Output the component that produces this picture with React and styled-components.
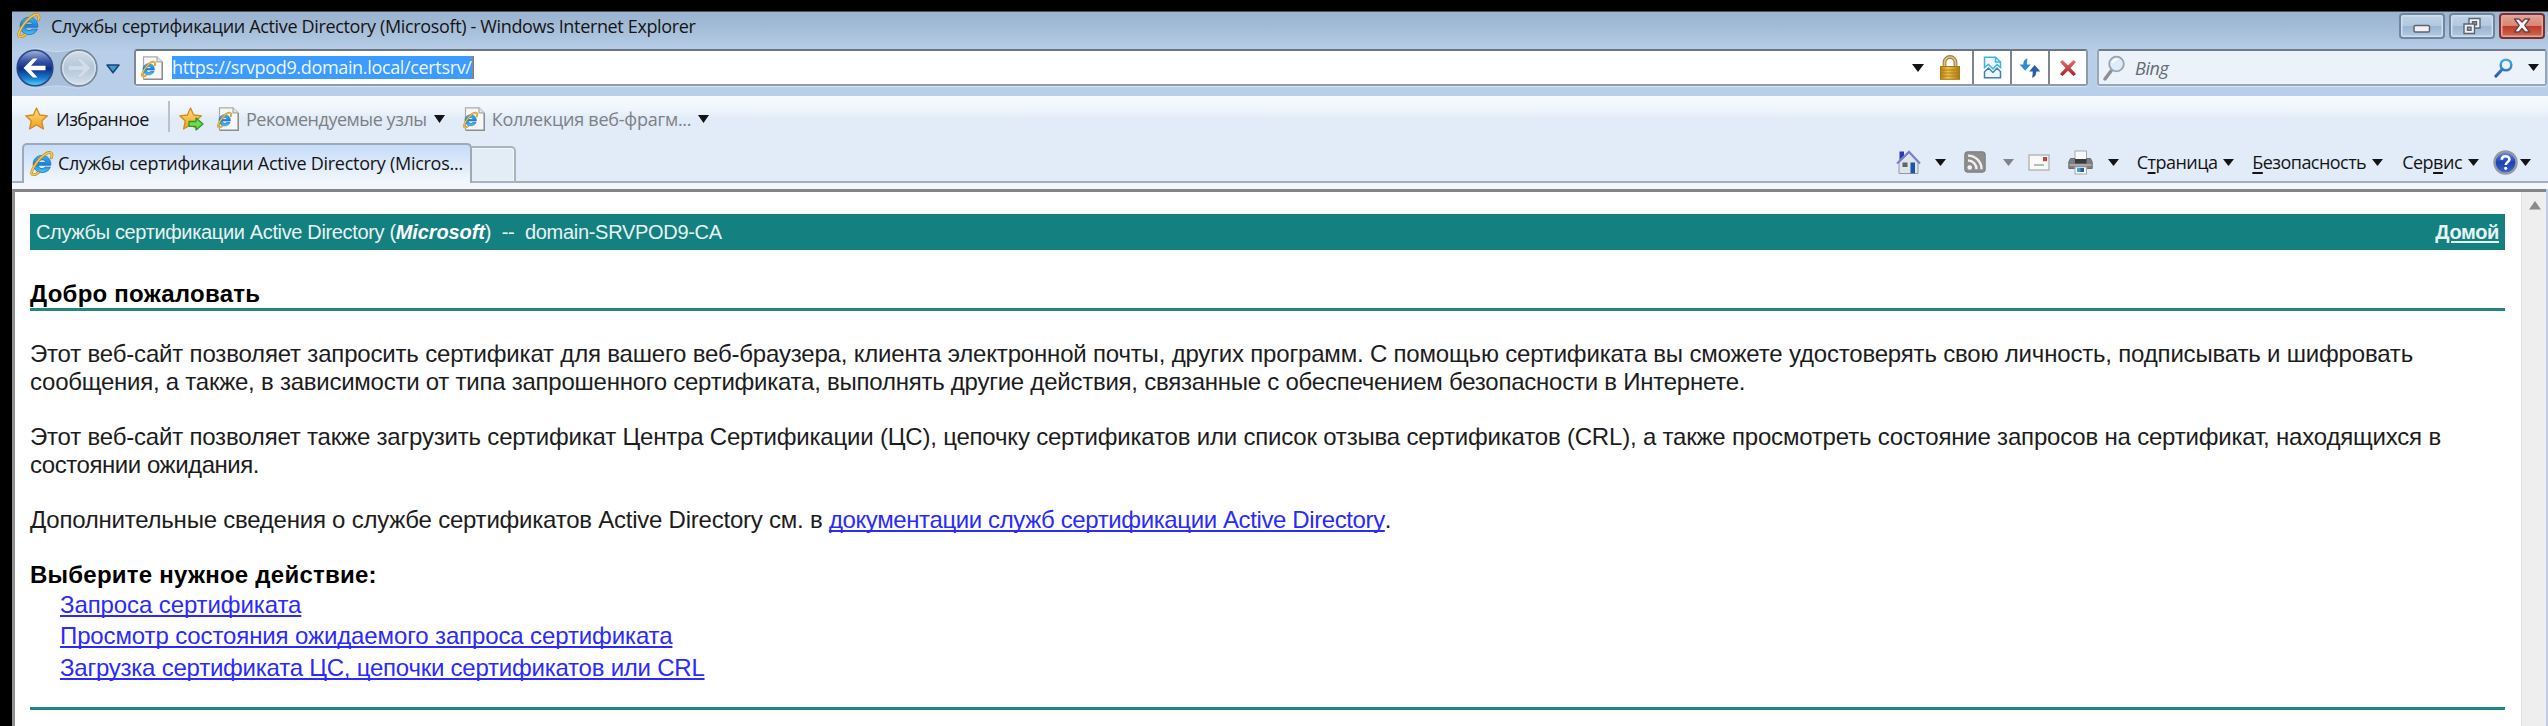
import React from 'react';
import styled, { createGlobalStyle } from 'styled-components';

const Global = createGlobalStyle`
  * { box-sizing: border-box; }
  html, body { margin: 0; background: #000; }
  svg { display: block; flex: none; }
`;

const UI_FONT = "'Open Sans', 'Noto Sans', sans-serif";
const PAGE_FONT = "'Liberation Sans', Arial, sans-serif";

const Desktop = styled.div`
  width: 2548px;
  height: 726px;
  padding: 11px 0 0 12px;
  background: #000;
  overflow: hidden;
`;

const Window = styled.div`
  display: flex;
  flex-direction: column;
  height: 715px;
  border-top: 1px solid #4d5358;
  background: linear-gradient(#9cb4cf 0, #9fb8d3 10px, #b9cfe9 40px, #b9cfe9 84px);
  font-family: ${UI_FONT};
  font-size: 18px;
  color: #141414;
`;

const Label = styled.span`
  white-space: pre;
  line-height: 24px;
  letter-spacing: ${(p) => p.$track || 0}px;
  margin-left: ${(p) => p.$gap || 0}px;
  color: ${(p) => p.$color || 'inherit'};
  font-style: ${(p) => (p.$italic ? 'italic' : 'normal')};
  u { text-decoration-thickness: 1.5px; text-underline-offset: 3px; }
`;

const TitleBar = styled.header`
  display: flex;
  align-items: center;
  height: 28px;
  padding: 0 3px 1px 4px;
`;

const Spacer = styled.div`
  flex: 1;
`;

const WindowButtons = styled.div`
  display: flex;
  gap: 4px;
`;

const WindowButton = styled.button`
  display: flex;
  align-items: center;
  justify-content: center;
  width: 46px;
  height: 26px;
  padding: 0;
  border: 2px solid ${(p) => (p.$close ? '#7a3033' : '#71859d')};
  border-radius: 4px;
  box-shadow: inset 0 0 0 1.5px ${(p) => (p.$close ? '#e4a79f' : '#cfdff0')};
  background: ${(p) =>
    p.$close
      ? 'linear-gradient(#e3a092 0, #d98677 48%, #bd3a25 50%, #cf6a50 100%)'
      : 'linear-gradient(#bfd2e7 0, #b3c9e0 48%, #9bb5d2 50%, #b0c9e3 100%)'};
`;

const NavBar = styled.div`
  display: flex;
  align-items: flex-start;
  height: 56px;
  padding: 7px 1px 0 3px;
`;

const NavDrop = styled.div`
  flex: none;
  width: 31px;
  padding: 17px 0 0 3px;
`;

const AddressBox = styled.div`
  display: flex;
  flex: none;
  align-items: stretch;
  width: 1954px;
  height: 37px;
  margin-top: 2px;
  border: 2px solid #8e9bab;
  border-top-color: #6b7683;
  border-left-color: #7c8896;
  border-radius: 3px;
  background: #fff;
  box-shadow: 0 1px 1px #d8e6f4;
`;

const AddressMain = styled.div`
  display: flex;
  align-items: center;
  flex: 1;
  padding: 0 11px 0 4px;
`;

const Selected = styled.span`
  height: 23px;
  margin-left: 8px;
  padding-right: 1px;
  border-right: 1.5px solid #cc6a1c;
  background: #3b9bff;
  color: #eef6ff;
  line-height: 22px;
  letter-spacing: -0.34px;
`;

const AddressButton = styled.div`
  display: flex;
  align-items: center;
  justify-content: center;
  width: 38px;
  border-left: 2px solid #7f868e;
`;

const SearchBox = styled.div`
  display: flex;
  flex: none;
  align-items: center;
  width: 450px;
  height: 37px;
  margin: 2px 0 0 9px;
  padding: 0 6px 0 4px;
  border: 2px solid #98a6b8;
  border-top-color: #707b89;
  border-radius: 3px;
  background: #ebf2fa;
  box-shadow: 0 1px 1px #d8e6f4;
`;

const Chrome = styled.div`
  background: linear-gradient(#f6fafe 0, #eff5fc 14px, #e2ecf8 22px, #e2ecf9 100%);
`;

const FavoritesBar = styled.div`
  display: flex;
  align-items: center;
  height: 47px;
  padding: 0 0 2px 13px;
`;

const Divider = styled.i`
  width: 2px;
  height: 31px;
  margin: -4px 9px 0 19px;
  background: #bcc1c8;
`;

const TabRow = styled.div`
  display: flex;
  align-items: flex-end;
  height: 40px;
`;

const RowEdge = styled.i`
  width: ${(p) => p.$width || 0}px;
  height: 2px;
  background: #a5afbc;
`;

const Tab = styled.div`
  display: flex;
  align-items: center;
  width: 450px;
  height: 40px;
  padding: 0 0 2px 5px;
  border: 2px solid #9fa9b5;
  border-bottom: 0;
  border-radius: 5px 5px 0 0;
  background: linear-gradient(#c6dcf8 0, #dce9fa 50%, #f4f8fd 100%);
`;

const NewTab = styled.div`
  width: 44px;
  height: 37px;
  border: 2px solid #aab3be;
  border-left: 0;
  border-radius: 0 5px 0 0;
  background: #e3edf6;
  box-shadow: inset -1px 1px 0 #f2f7fc;
`;

const CommandBar = styled.div`
  display: flex;
  align-items: center;
  flex: 1;
  height: 40px;
  padding: 0 17px 0 1380px;
  border-bottom: 2px solid #a5afbc;
`;

const Slot = styled.div`
  display: flex;
  margin-left: ${(p) => p.$gap || 0}px;
`;

const Strip = styled.div`
  height: 6px;
  background: #f3f7fd;
`;

const Viewport = styled.div`
  display: flex;
  flex: 1;
  margin-right: 2px;
  border-top: 3px solid #858585;
  border-left: 3px solid #909090;
  background: #fff;
`;

const Page = styled.main`
  flex: 1;
  padding: 22px 16px 0 15px;
  font-family: ${PAGE_FONT};
  font-size: 24px;
  line-height: 27.7px;
  color: #1c1c1c;
`;

const ScrollBar = styled.aside`
  width: 25px;
  padding: 9px 0 0 7px;
  background: #eeeeee;
  border-left: 1px solid #e2e2e2;
`;

const Banner = styled.div`
  display: flex;
  justify-content: space-between;
  align-items: center;
  height: 36px;
  padding: 1px 6px 0;
  background: #148080;
  color: #e6f3f3;
  font-size: 20px;
`;

const Text = styled.span`
  white-space: pre;
  letter-spacing: ${(p) => p.$track || 0}px;
`;

const Brand = styled.b`
  font-style: italic;
  letter-spacing: -0.1px;
  color: #fff;
`;

const HomeLink = styled.a`
  font-weight: 700;
  letter-spacing: -0.35px;
  text-decoration: underline;
  text-decoration-thickness: 2px;
  text-underline-offset: 2px;
`;

const Heading = styled.h1`
  margin: 29px 0 0;
  height: 32px;
  border-bottom: 3px solid #218585;
  font-size: 24px;
  line-height: 29px;
  letter-spacing: 0.25px;
  color: #000;
`;

const Paragraph = styled.p`
  margin: ${(p) => p.$top || 27.7}px 0 0;
`;

const Line = styled.span`
  display: block;
  white-space: pre;
  letter-spacing: ${(p) => p.$track}px;
`;

const Link = styled.a`
  color: #2a2aff;
  letter-spacing: ${(p) => p.$track}px;
  text-decoration: underline;
  text-decoration-thickness: 2px;
  text-underline-offset: 2px;
  text-decoration-skip-ink: none;
`;

const Subheading = styled.h2`
  margin: 27.7px 0 0;
  font-size: 24px;
  line-height: 27.7px;
  letter-spacing: 0.24px;
  color: #000;
`;

const ActionList = styled.ul`
  margin: 0;
  padding: 0 0 0 30px;
  list-style: none;
  line-height: 31.3px;
`;

const Rule = styled.hr`
  height: 3px;
  margin: 24px 0 0;
  border: 0;
  background: #218585;
`;

const GradientHolder = styled.div`
  height: 0;
  overflow: hidden;
`;

function Caret({ w = 11, h = 7, color = '#141414' }) {
  return (
    <svg width={w} height={h} viewBox="0 0 12 7" preserveAspectRatio="none">
      <path d="M0 0h12L6 7z" fill={color} />
    </svg>
  );
}

function ExplorerShape() {
  return (
    <>
      <path
        d="M12.6 4.200c-5 0-8.600 3.600-8.600 8.200 0 4.700 3.600 8.300 8.600 8.300 3.700 0 6.700-2 7.900-5.200h-5c-.6.9-1.600 1.400-2.800 1.400-2.100 0-3.500-1.300-3.600-3.200h11.800c.4-5.600-3-9.500-8.300-9.500zm-3.400 6.800c.4-1.600 1.600-2.600 3.400-2.600s3 1 3.300 2.600z"
        fill="url(#ieBlue)"
        stroke="#1565b5"
        strokeWidth=".7"
      />
      <path
        d="M21.500 6.500c1-2.600.6-4.600-1-5-2.700-.7-8.200 3-12.500 8.700-4.600 6-6.800 11.600-4.500 12.600 1.200.5 3.200-.3 5.500-2"
        fill="none"
        stroke="#b98213"
        strokeWidth="2.600"
        strokeLinecap="round"
      />
      <path
        d="M21.500 6.500c1-2.600.6-4.600-1-5-2.700-.7-8.200 3-12.500 8.700-4.600 6-6.800 11.600-4.500 12.600 1.200.5 3.200-.3 5.500-2"
        fill="none"
        stroke="#f6c94a"
        strokeWidth="1.500"
        strokeLinecap="round"
      />
    </>
  );
}

function Gradients() {
  return (
    <svg width="0" height="0">
      <defs>
        <linearGradient id="ieBlue" x1="0" y1="0" x2="0" y2="1">
          <stop offset="0" stopColor="#37b4f0" />
          <stop offset=".5" stopColor="#1a86dc" />
          <stop offset="1" stopColor="#49c3f7" />
        </linearGradient>
        <linearGradient id="starGold" x1="0" y1="0" x2="0" y2="1">
          <stop offset="0" stopColor="#ffe27a" />
          <stop offset="1" stopColor="#f39a1c" />
        </linearGradient>
        <linearGradient id="backBlue" x1="0" y1="0" x2="0" y2="1">
          <stop offset="0" stopColor="#a6b6dc" />
          <stop offset=".3" stopColor="#3c55a8" />
          <stop offset=".52" stopColor="#0d2d88" />
          <stop offset=".8" stopColor="#1c7fd0" />
          <stop offset="1" stopColor="#55dcff" />
        </linearGradient>
        <linearGradient id="forwardGray" x1="0" y1="0" x2="0" y2="1">
          <stop offset="0" stopColor="#d3dde8" />
          <stop offset=".5" stopColor="#b5c6d8" />
          <stop offset="1" stopColor="#d4e1ee" />
        </linearGradient>
        <linearGradient id="lockGold" x1="0" y1="0" x2="1" y2="0">
          <stop offset="0" stopColor="#b8810f" />
          <stop offset=".4" stopColor="#f0c24a" />
          <stop offset="1" stopColor="#b07a10" />
        </linearGradient>
        <linearGradient id="redCross" x1="0" y1="0" x2="0" y2="1">
          <stop offset="0" stopColor="#e8736f" />
          <stop offset="1" stopColor="#a02024" />
        </linearGradient>
        <linearGradient id="lensBlue" gradientUnits="userSpaceOnUse" x1="0" y1="0" x2="0" y2="20">
          <stop offset="0" stopColor="#43b4e4" />
          <stop offset="1" stopColor="#2a55b0" />
        </linearGradient>
        <linearGradient id="helpBlue" x1="0" y1="0" x2="0" y2="1">
          <stop offset="0" stopColor="#6d8fe0" />
          <stop offset=".5" stopColor="#1f41b0" />
          <stop offset="1" stopColor="#3a68dc" />
        </linearGradient>
      </defs>
    </svg>
  );
}

function ExplorerIcon() {
  return (
    <svg width="25" height="25" viewBox="0 0 24 24">
      <ExplorerShape />
    </svg>
  );
}

function PageIcon() {
  return (
    <svg width="24" height="24" viewBox="0 0 24 24">
      <path d="M3.500.8h13.500l5 5v17.400H3.500z" fill="#f7f7f7" stroke="#a9a9a9" strokeWidth="1.200" />
      <path d="M17 .8v5h5" fill="#e4e4e4" stroke="#a9a9a9" strokeWidth="1.200" />
      <path d="M22.400 6v17.400H4" fill="none" stroke="#8e8e8e" strokeWidth="1.200" />
      <g transform="translate(.2 4.800) scale(.68)">
        <ExplorerShape />
      </g>
    </svg>
  );
}

function NavButtons() {
  return (
    <svg width="88" height="42" viewBox="0 0 88 42">
      <path
        d="M20 1.500c8 0 12 3 22 3s16-3 22-3a20 20 0 0 1 0 39.500c-8 0-12-2-22-2s-14 2-22 2a20 20 0 0 1 0-39.500z"
        fill="#a9c0da"
        stroke="#cbdcee"
        strokeWidth="1"
      />
      <circle cx="20" cy="21" r="17.800" fill="url(#backBlue)" stroke="#2b4886" strokeWidth="1.600" />
      <path d="M8.500 21l9.500-9.500h4.500l-6.500 7.300h14.500v4.400H16l6.500 7.300H18z" fill="#fff" />
      <circle cx="64" cy="21" r="17.800" fill="url(#forwardGray)" stroke="#78889b" strokeWidth="1.800" />
      <circle cx="64" cy="21" r="16.200" fill="none" stroke="#dde7f1" strokeWidth="1.200" />
      <path d="M75.500 21L66 11.500h-4.500l6.500 7.300H53.500v4.400H68l-6.500 7.300H66z" fill="#d2dde9" stroke="#bccad9" strokeWidth=".8" />
    </svg>
  );
}

function NavCaret() {
  return (
    <svg width="14" height="10" viewBox="0 0 14 10">
      <path d="M1 1h12L7 8.800z" fill="#3d9ad0" stroke="#1d4372" strokeWidth="1.500" strokeLinejoin="round" />
    </svg>
  );
}

function StarIcon({ add }) {
  return (
    <svg width="25" height="24" viewBox="0 0 25 24">
      <path
        d="M11.500 1l3.200 7 7.800.8-5.800 5.200 1.700 8-6.900-4-6.900 4 1.700-8L.8 8.800l7.600-.8z"
        fill="url(#starGold)"
        stroke="#cf8b22"
        strokeWidth="1.300"
        strokeLinejoin="round"
      />
      {add && (
        <path
          d="M10 14.500h7v-3.600l7 6-7 6v-3.600h-7z"
          fill="#6fdc4d"
          stroke="#2b9a2b"
          strokeWidth="1.300"
          strokeLinejoin="round"
        />
      )}
    </svg>
  );
}

function LockIcon() {
  return (
    <svg width="22" height="25" viewBox="0 0 22 25">
      <path d="M5.500 12V7.500a5.500 5.500 0 0 1 11 0V12" fill="none" stroke="#9b8244" strokeWidth="3.800" />
      <path d="M5.500 12V7.500a5.500 5.500 0 0 1 11 0V12" fill="none" stroke="#dfc57c" strokeWidth="1.600" />
      <rect x="1.500" y="11.500" width="19" height="12.800" fill="url(#lockGold)" stroke="#a87812" />
      <path d="M2 15h18M2 18h18M2 21h18" stroke="#a97a18" strokeWidth=".9" />
    </svg>
  );
}

function BrokenPageIcon() {
  return (
    <svg width="19" height="23" viewBox="0 0 19 23" fill="#eef8fd" strokeWidth="1.500">
      <path d="M1.500 11.500V1.200h11l5 4.800v5.500l-3.500-3-4 4.500-4.500-4.500z" stroke="#3fb3dc" />
      <path d="M12.500 1.200V6h5" fill="none" stroke="#3fb3dc" />
      <path d="M1.500 21.800v-6l4-3.800 4.500 4.500 4-4.500 3.500 3.500v6.300z" stroke="#3f7fc0" />
    </svg>
  );
}

function RefreshIcon() {
  return (
    <svg width="22" height="22" viewBox="0 0 22 22">
      <path d="M8.500 1.500C5.500 2 4.300 4 4.300 7.500H.6l5.600 6.300 5.600-6.300H7.900c0-2.500.2-4.300.6-6z" fill="#2f8ccc" />
      <path d="M13 20.600c3-.5 4.300-2.600 4.300-6.100h4L15.700 8l-5.500 6.500h3.500c0 2.500-.2 4.400-.7 6.100z" fill="#2a5ea8" />
    </svg>
  );
}

function CrossIcon() {
  return (
    <svg width="18" height="18" viewBox="0 0 18 18">
      <path d="M1 3l2.500-2L9 6.300 14.500 1 17 3l-5.500 6L17 15l-2.500 2L9 11.700 3.500 17 1 15l5.500-6z" fill="url(#redCross)" />
    </svg>
  );
}

function LensIcon() {
  return (
    <svg width="22" height="26" viewBox="0 0 22 26">
      <path d="M8 16l-6 8" stroke="#8f8f93" strokeWidth="3.400" strokeLinecap="round" />
      <circle cx="13.500" cy="9" r="7.300" fill="#dcecfa" stroke="#9aa3ad" strokeWidth="1.800" />
      <path d="M9.500 8a4.300 4.300 0 0 1 5-3.500" fill="none" stroke="#fff" strokeWidth="2" />
    </svg>
  );
}

function SearchIcon() {
  return (
    <svg width="19" height="20" viewBox="0 0 19 20" fill="none" stroke="url(#lensBlue)">
      <circle cx="12" cy="7" r="5.300" strokeWidth="2.500" />
      <path d="M8 11.500l-6 6.500" strokeWidth="3.200" strokeLinecap="round" />
    </svg>
  );
}

function HomeIcon() {
  return (
    <svg width="25" height="25" viewBox="0 0 25 25">
      <path d="M3.500 1.500h4.500v6.500l-4.500 3z" fill="#2a39b8" />
      <path d="M3 12.500L13 3l9 9.500V23.500H3z" fill="#dfe3ea" stroke="#9098a6" strokeWidth="1" />
      <path d="M1 13.500L13 1.800l11 11.700" fill="none" stroke="#7482cc" strokeWidth="2" />
      <rect x="6.500" y="12.500" width="5" height="4.500" fill="#5a6472" />
      <rect x="14.500" y="12.500" width="4.500" height="10.800" fill="#1c55a8" />
    </svg>
  );
}

function FeedIcon() {
  return (
    <svg width="22" height="22" viewBox="0 0 22 22">
      <rect x=".8" y=".8" width="20.400" height="20.400" rx="2.500" fill="#8d8d8d" stroke="#7b7b7b" />
      <circle cx="5.700" cy="16.500" r="2.300" fill="#f4f4f4" />
      <path d="M4 9.500a8.500 8.500 0 0 1 8.500 8.800M4 4.600a13.500 13.500 0 0 1 13.500 13.700" fill="none" stroke="#f0f0f0" strokeWidth="2.400" />
    </svg>
  );
}

function MailIcon() {
  return (
    <svg width="22" height="17" viewBox="0 0 22 17">
      <rect x="1" y="1" width="20" height="15" fill="#f9f9f9" stroke="#b4b4b4" strokeWidth="1.400" />
      <rect x="15" y="3" width="4" height="4.200" fill="#d93a35" />
      <path d="M6 11h10" stroke="#a5a5a5" strokeWidth="1.500" />
    </svg>
  );
}

function PrinterIcon() {
  return (
    <svg width="25" height="25" viewBox="0 0 25 25">
      <rect x="7" y="1" width="11.500" height="9" fill="#fafafa" stroke="#a8a8a8" />
      <path d="M2.500 8.500h4.500v3h11.500v-3h4l1.700 3.500v6.500H.8V12z" fill="#7d7f82" stroke="#6a6c70" />
      <rect x="7" y="9" width="11.500" height="4.500" fill="#3a3b3d" />
      <path d="M1.500 15h22" stroke="#b8babd" strokeWidth="1.400" />
      <rect x="7" y="17" width="11.500" height="7" fill="#fff" stroke="#a8a8a8" />
      <rect x="9" y="18" width="3.200" height="4" fill="#3fa8c8" />
      <rect x="12.200" y="18" width="3.800" height="4" fill="#2a5fa8" />
    </svg>
  );
}

function HelpIcon() {
  return (
    <svg width="25" height="25" viewBox="0 0 25 25">
      <circle cx="12.500" cy="12.500" r="11" fill="url(#helpBlue)" stroke="#9298a4" strokeWidth="2.400" />
      <path d="M8.800 9.800c0-4.800 7.600-4.600 7.600-.4 0 2.600-3.600 2.800-3.600 5.600" fill="none" stroke="#fff" strokeWidth="2.600" />
      <circle cx="12.700" cy="18.300" r="1.600" fill="#fff" />
    </svg>
  );
}

function MinimizeGlyph() {
  return (
    <svg width="18" height="20" viewBox="0 0 18 20">
      <rect x="1" y="9.500" width="15.500" height="6.500" rx="1.200" fill="#f2f2f2" stroke="#5b6570" strokeWidth="1.500" />
    </svg>
  );
}

function RestoreGlyph() {
  return (
    <svg width="20" height="18" viewBox="0 0 20 18" fill="#f2f2f2" stroke="#5b6570" strokeWidth="1.400">
      <path d="M7 1.500h11v9.500H7z" />
      <path d="M10.500 4.800h4v3h-4z" fill="#9fb5cd" />
      <path d="M2 7h10.500v9.500H2z" />
      <path d="M5.500 10.200h3.500v3h-3.500z" fill="#9fb5cd" />
    </svg>
  );
}

function CloseGlyph() {
  return (
    <svg width="18" height="17" viewBox="0 0 18 17">
      <path
        d="M1.500 2h4.500l3 3 3-3h4.500l-4.700 6.300 4.900 6.700h-4.700l-3-3.500-3 3.500H1.300l4.900-6.700z"
        fill="#f6f6f6"
        stroke="#6a4348"
        strokeWidth="1.400"
        strokeLinejoin="round"
      />
    </svg>
  );
}

function ScrollArrow() {
  return (
    <svg width="12" height="9" viewBox="0 0 12 9">
      <path d="M6 0l6 8.500H0z" fill="#8a8a8a" />
    </svg>
  );
}

export default function App() {
  return (
    <Desktop>
      <Global />
      <GradientHolder>
        <Gradients />
      </GradientHolder>
      <Window>
        <TitleBar>
          <ExplorerIcon />
          <Label $gap={10} $track={-0.35}>Службы сертификации Active Directory (Microsoft) - Windows Internet Explorer</Label>
          <Spacer />
          <WindowButtons>
            <WindowButton><MinimizeGlyph /></WindowButton>
            <WindowButton><RestoreGlyph /></WindowButton>
            <WindowButton $close><CloseGlyph /></WindowButton>
          </WindowButtons>
        </TitleBar>

        <NavBar>
          <NavButtons />
          <NavDrop><NavCaret /></NavDrop>
          <AddressBox>
            <AddressMain>
              <PageIcon />
              <Selected>https://srvpod9.domain.local/certsrv/</Selected>
              <Spacer />
              <Caret w={12} h={8} />
              <Slot $gap={15}><LockIcon /></Slot>
            </AddressMain>
            <AddressButton><BrokenPageIcon /></AddressButton>
            <AddressButton><RefreshIcon /></AddressButton>
            <AddressButton><CrossIcon /></AddressButton>
          </AddressBox>
          <SearchBox>
            <LensIcon />
            <Label $gap={10} $track={-0.4} $color="#666b72" $italic>Bing</Label>
            <Spacer />
            <SearchIcon />
            <Slot $gap={15}><Caret /></Slot>
          </SearchBox>
        </NavBar>

        <Chrome>
          <FavoritesBar>
            <StarIcon />
            <Label $gap={6} $track={-0.55}>Избранное</Label>
            <Divider />
            <StarIcon add />
            <Slot $gap={12}><PageIcon /></Slot>
            <Label $gap={6} $track={-0.45} $color="#7d8084">Рекомендуемые узлы</Label>
            <Slot $gap={7}><Caret h={8} /></Slot>
            <Slot $gap={17}><PageIcon /></Slot>
            <Label $gap={6} $track={-0.25} $color="#7d8084">Коллекция веб-фрагм...</Label>
            <Slot $gap={7}><Caret h={8} /></Slot>
          </FavoritesBar>

          <TabRow>
            <RowEdge $width={10} />
            <Tab>
              <ExplorerIcon />
              <Label $gap={4} $track={-0.27}>Службы сертификации Active Directory (Micros...</Label>
            </Tab>
            <NewTab />
            <CommandBar>
              <HomeIcon />
              <Slot $gap={14}><Caret /></Slot>
              <Slot $gap={18}><FeedIcon /></Slot>
              <Slot $gap={17}><Caret color="#808488" /></Slot>
              <Slot $gap={14}><MailIcon /></Slot>
              <Slot $gap={18}><PrinterIcon /></Slot>
              <Slot $gap={15}><Caret /></Slot>
              <Label $gap={18} $track={-0.55}>С<u>т</u>раница</Label>
              <Slot $gap={6}><Caret /></Slot>
              <Label $gap={18} $track={-0.55}><u>Б</u>езопасность</Label>
              <Slot $gap={6}><Caret /></Slot>
              <Label $gap={19} $track={-0.5}>Сер<u>в</u>ис</Label>
              <Slot $gap={6}><Caret /></Slot>
              <Slot $gap={14}><HelpIcon /></Slot>
              <Slot $gap={2}><Caret /></Slot>
            </CommandBar>
          </TabRow>
          <Strip />
        </Chrome>

        <Viewport>
          <Page>
            <Banner>
              <span>
                <Text $track={-0.35}>Службы сертификации Active Directory (</Text>
                <Brand>Microsoft</Brand>
                <Text $track={-0.3}>{')  --  domain-SRVPOD9-CA'}</Text>
              </span>
              <HomeLink>Домой</HomeLink>
            </Banner>
            <Heading>Добро пожаловать</Heading>
            <Paragraph $top={28.8}>
              <Line $track={-0.183}>Этот веб-сайт позволяет запросить сертификат для вашего веб-браузера, клиента электронной почты, других программ. С помощью сертификата вы сможете удостоверять свою личность, подписывать и шифровать</Line>
              <Line $track={-0.245}>сообщения, а также, в зависимости от типа запрошенного сертификата, выполнять другие действия, связанные с обеспечением безопасности в Интернете.</Line>
            </Paragraph>
            <Paragraph>
              <Line $track={-0.195}>Этот веб-сайт позволяет также загрузить сертификат Центра Сертификации (ЦС), цепочку сертификатов или список отзыва сертификатов (CRL), а также просмотреть состояние запросов на сертификат, находящихся в</Line>
              <Line $track={-0.45}>состоянии ожидания.</Line>
            </Paragraph>
            <Paragraph>
              <Text $track={-0.23}>Дополнительные сведения о службе сертификатов Active Directory см. в </Text>
              <Link $track={-0.39}>документации служб сертификации Active Directory</Link>.
            </Paragraph>
            <Subheading>Выберите нужное действие:</Subheading>
            <ActionList>
              <li><Link $track={-0.1}>Запроса сертификата</Link></li>
              <li><Link $track={-0.12}>Просмотр состояния ожидаемого запроса сертификата</Link></li>
              <li><Link $track={-0.23}>Загрузка сертификата ЦС, цепочки сертификатов или CRL</Link></li>
            </ActionList>
            <Rule />
          </Page>
          <ScrollBar><ScrollArrow /></ScrollBar>
        </Viewport>
      </Window>
    </Desktop>
  );
}
